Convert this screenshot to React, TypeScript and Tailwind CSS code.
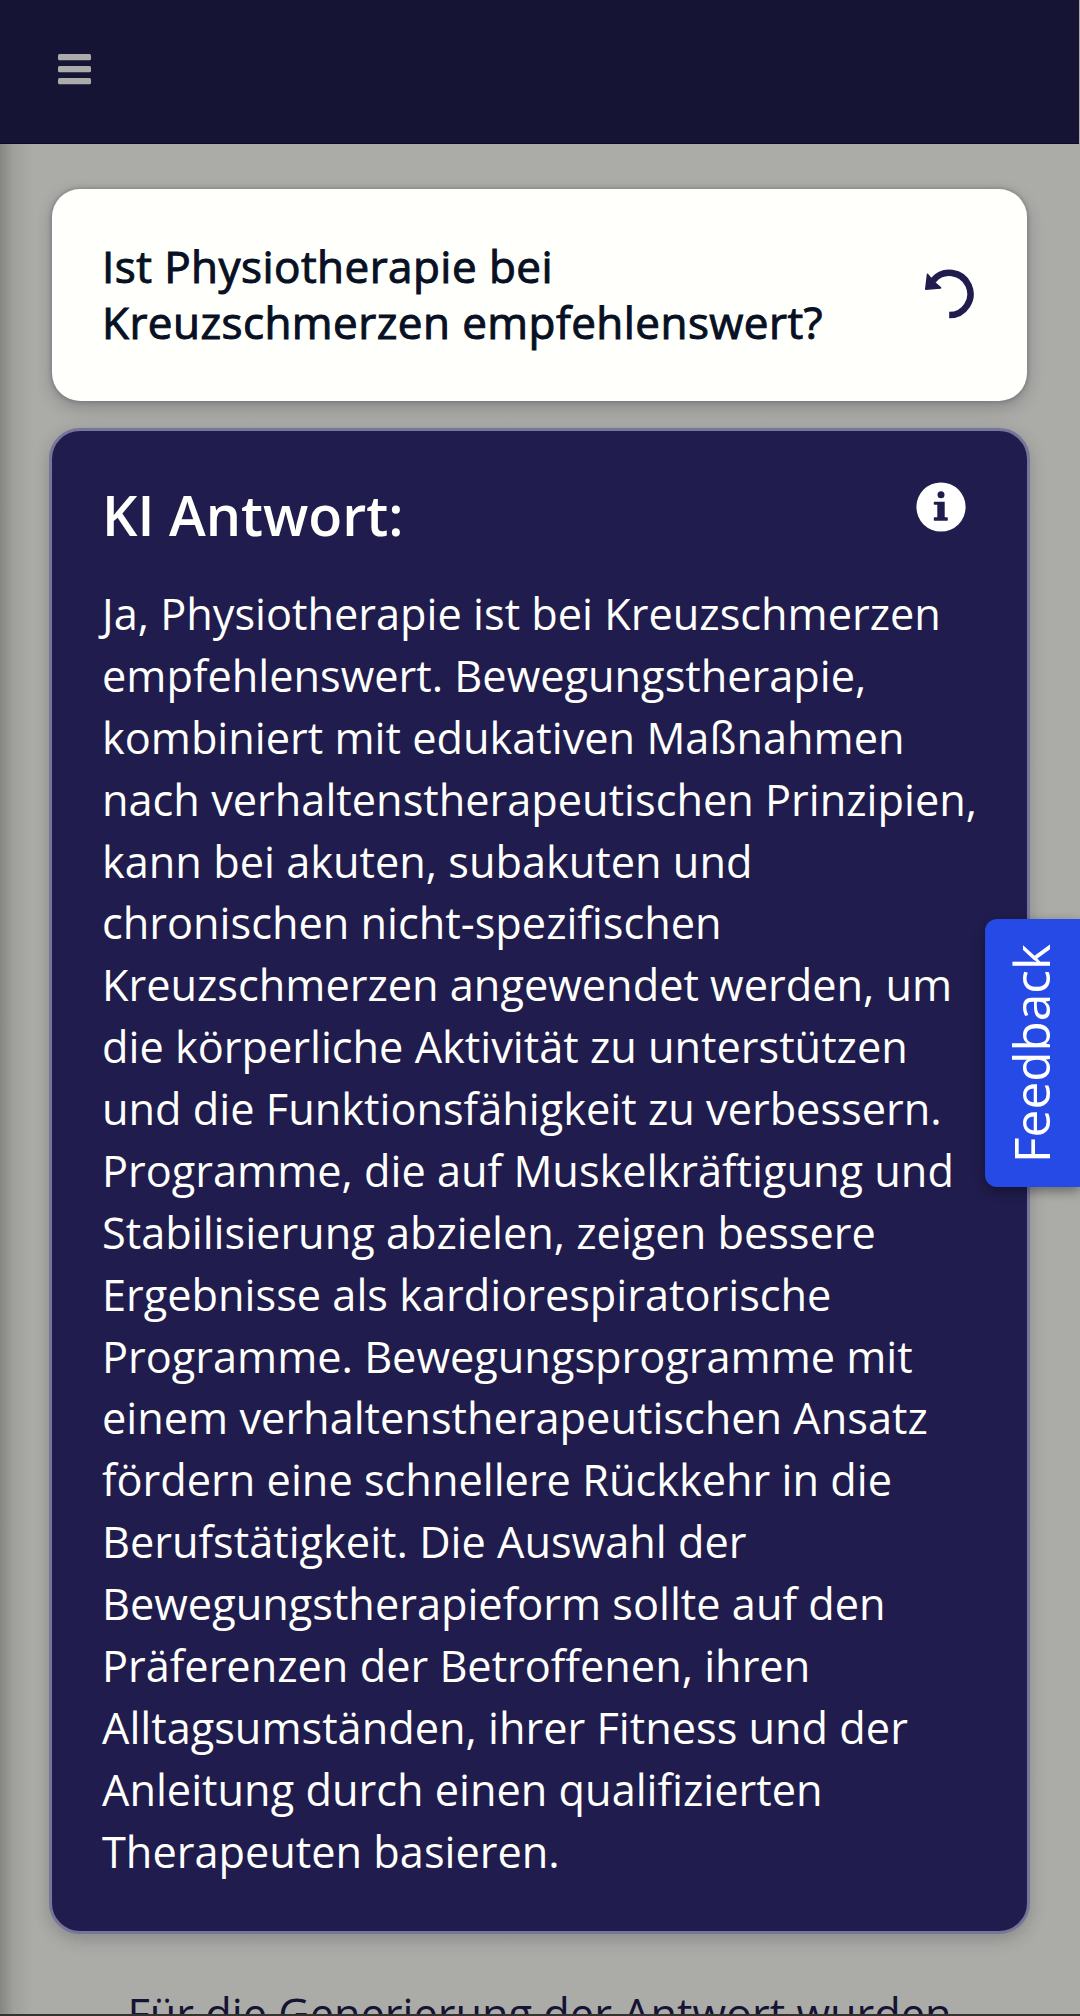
const answerLines = [
  "Ja, Physiotherapie ist bei Kreuzschmerzen",
  "empfehlenswert. Bewegungstherapie,",
  "kombiniert mit edukativen Maßnahmen",
  "nach verhaltenstherapeutischen Prinzipien,",
  "kann bei akuten, subakuten und",
  "chronischen nicht-spezifischen",
  "Kreuzschmerzen angewendet werden, um",
  "die körperliche Aktivität zu unterstützen",
  "und die Funktionsfähigkeit zu verbessern.",
  "Programme, die auf Muskelkräftigung und",
  "Stabilisierung abzielen, zeigen bessere",
  "Ergebnisse als kardiorespiratorische",
  "Programme. Bewegungsprogramme mit",
  "einem verhaltenstherapeutischen Ansatz",
  "fördern eine schnellere Rückkehr in die",
  "Berufstätigkeit. Die Auswahl der",
  "Bewegungstherapieform sollte auf den",
  "Präferenzen der Betroffenen, ihren",
  "Alltagsumständen, ihrer Fitness und der",
  "Anleitung durch einen qualifizierten",
  "Therapeuten basieren.",
];

function MenuIcon() {
  return (
    <svg width="33" height="31" viewBox="0 0 33 31" fill="#ababab">
      <rect y="0" width="33" height="6.2" rx="1.5" />
      <rect y="12" width="33" height="6.2" rx="1.5" />
      <rect y="24" width="33" height="6.2" rx="1.5" />
    </svg>
  );
}

function UndoIcon() {
  return (
    <svg width="50" height="50" viewBox="0 0 50 50" className="shrink-0">
      <path d="M25.2 46.1A21.1 21.1 0 1 0 9.2 11.4" fill="none" stroke="#201d4e" strokeWidth="6.5" />
      <path d="M2.8 5Q3 4 4 4.8L7.6 9L12.6 14.2L17.2 18.3Q18 19.6 16.6 19.7L1.6 21Q0.9 21 1 20Z" fill="#201d4e" />
    </svg>
  );
}

function InfoIcon() {
  return (
    <svg width="50" height="50" viewBox="0 0 50 50" className="shrink-0">
      <circle cx="25" cy="25" r="24.6" fill="#ffffff" />
      <circle cx="25" cy="12.8" r="3.5" fill="#201d4e" />
      <path
        d="M18.5 19.8H28.7V35.2H31.1Q31.8 35.2 31.8 35.9V38Q31.8 38.7 31.1 38.7H18.5Q17.8 38.7 17.8 38V35.9Q17.8 35.2 18.5 35.2H21.3V22.7H18.5Q17.8 22.7 17.8 22V20.5Q17.8 19.8 18.5 19.8Z"
        fill="#201d4e"
      />
    </svg>
  );
}

export default function App() {
  return (
    <div className="relative flex h-[2016px] w-[1080px] flex-col overflow-hidden bg-[#ababa7] font-['Open_Sans',sans-serif]">
      <header className="h-[143.5px] w-[1079px] shrink-0 border-b border-[#0a0733] bg-[#161434] pt-[54px] pl-[58px]">
        <MenuIcon />
      </header>
      <main className="flex h-[1872.5px] shrink-0 flex-col bg-linear-to-r from-[#858582] via-[#a0a09d] via-[14px] to-[#ababa7] to-[34px] pt-[45px] pr-[50px] pl-[49px]">
        <section className="mr-[3px] ml-[3px] flex h-[212px] shrink-0 items-start justify-between rounded-[28px] bg-[#fffffc] pt-[49px] pr-[53px] pl-[50px] shadow-[0_6px_16px_rgba(40,45,60,0.28),0_0_3px_2px_rgba(110,110,120,0.35)]">
          <h1 className="text-[44px] leading-[56px] font-normal tracking-[0.45px] whitespace-nowrap text-[#081024] [-webkit-text-stroke:1px_#081024]">
            Ist Physiotherapie bei
            <br />
            Kreuzschmerzen empfehlenswert?
          </h1>
          <div className="pt-[31px]">
            <UndoIcon />
          </div>
        </section>
        <section className="mt-[27px] h-[1506.5px] shrink-0 rounded-[31px] border-[3px] border-[#77759a] bg-[#201d4e] pr-[61.5px] pl-[50px] shadow-[0_5px_16px_rgba(40,40,50,0.25)]">
          <div className="flex items-start justify-between pt-[48.5px]">
            <h2 className="text-[55.6px] leading-[72px] font-semibold whitespace-nowrap text-[#fffffc]">KI Antwort:</h2>
            <div className="pt-[3px]">
              <InfoIcon />
            </div>
          </div>
          <p className="mt-[32px] text-[43.3px] leading-[61.875px] whitespace-nowrap text-[#fffffc]">
            {answerLines.map((line) => (
              <span key={line} className="block">
                {line}
              </span>
            ))}
          </p>
        </section>
        <p className="mt-[49px] text-center text-[43.3px] leading-[62px] whitespace-nowrap text-[#161434]">
          Für die Generierung der Antwort wurden
        </p>
      </main>
      <button className="absolute top-[919px] right-0 flex h-[268px] w-[95px] items-center justify-center rounded-l-[12px] bg-[#254ae5] pr-[3px] shadow-[0_4px_12px_rgba(0,0,0,0.4)]">
        <span className="rotate-180 text-[49.5px] leading-[60px] whitespace-nowrap text-white [writing-mode:vertical-rl]">Feedback</span>
      </button>
      <div className="absolute bottom-0 left-0 h-[2px] w-full bg-[#36322f]" />
    </div>
  );
}
